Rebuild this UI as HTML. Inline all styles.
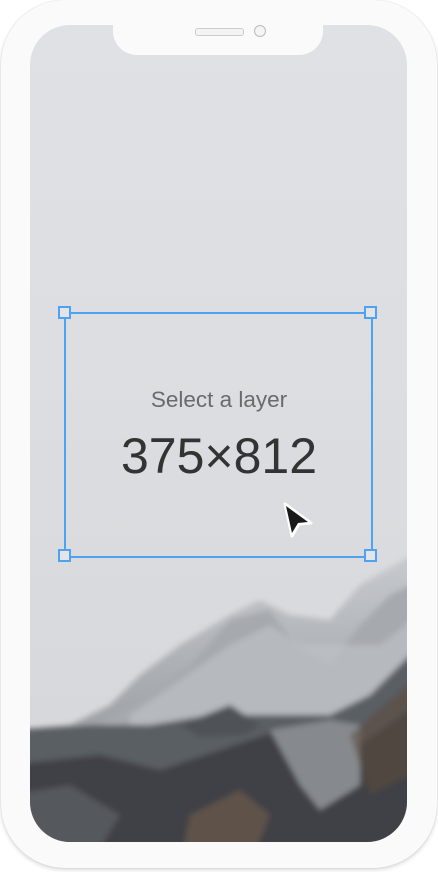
<!DOCTYPE html>
<html><head><style>
html,body{margin:0;padding:0;width:438px;height:872px;background:#fff;overflow:hidden;font-family:"Liberation Sans",sans-serif}
.phone{position:absolute;left:1px;top:0;width:436px;height:868px;border-radius:64px;background:#fafafa;box-shadow:0 2px 4px rgba(0,0,0,.15),0 0 1px rgba(0,0,0,.2)}
.screen{position:absolute;left:30px;top:25px;width:377px;height:817px;border-radius:40px;overflow:hidden;background:linear-gradient(#dfe1e5 0%,#dcdee1 40%,#d9dbde 65%,#d4d6d9 100%)}
.notch{position:absolute;left:113px;top:25px;width:210px;height:30px;background:#fafafa;border-radius:0 0 24px 24px}
.speaker{position:absolute;left:195px;top:28px;width:47px;height:6px;border-radius:3px;border:1px solid #ccc;background:#f4f4f4}
.cam{position:absolute;left:254px;top:25px;width:10px;height:10px;border-radius:50%;border:1px solid #bbb;background:#f4f4f4}
.box{position:absolute;left:64px;top:312px;width:309px;height:246px;border:2.5px solid #4da3f2;box-sizing:border-box}
.h{position:absolute;width:13px;height:13px;border:2px solid #4da3f2;background:#e2e4e7;box-sizing:border-box}
.t1{position:absolute;left:0;width:438px;top:387px;text-align:center;font-size:22.5px;color:#6a6a6a}
.t2{position:absolute;left:0;width:438px;top:427px;text-align:center;font-size:50px;color:#333}
</style></head><body>
<div class="phone"></div>
<div class="screen">
<svg width="377" height="817" viewBox="0 0 377 817" style="position:absolute;left:0;top:0">
<defs>
<linearGradient id="fog" x1="0" y1="0" x2="0" y2="1"><stop offset="0" stop-color="#c9ccd0"/><stop offset="1" stop-color="#7e8287"/></linearGradient>
<filter id="b"><feGaussianBlur stdDeviation="3"/></filter>
</defs>
<g filter="url(#b)">
<polygon points="40,700 80,680 110,650 150,620 200,590 230,575 260,590 300,595 330,560 400,520 400,840 -20,840 -20,705" fill="url(#fog)"/>
<polygon points="60,705 120,670 160,640 200,595 240,585 265,620 300,640 330,600 360,570 400,550 400,840 -20,840 -20,715" fill="#a6a9ad"/>
<polygon points="100,690 150,655 200,620 240,600 270,620 320,620 350,620 400,580 400,840 100,840" fill="#c2c5c9" opacity=".6"/>
<polygon points="-20,705 60,700 120,700 180,690 240,690 300,690 340,670 400,610 400,840 -20,840" fill="#5a5e63"/>
<polygon points="-20,740 70,730 130,745 190,725 250,705 300,700 330,720 400,670 400,840 -20,840" fill="#3f4146"/>
<polygon points="240,705 300,695 330,700 330,760 290,785 270,760" fill="#868a8f"/>
<polygon points="150,700 200,680 230,700 215,710 170,712" fill="#505358"/>
<polygon points="160,790 210,765 240,790 220,840 150,840" fill="#6e5a48" opacity=".7"/>
<polygon points="320,710 400,640 400,740 340,770" fill="#5c4a3c" opacity=".55"/>
<polygon points="-20,770 40,760 90,790 60,840 -20,840" fill="#55585c"/>
</g>
</svg>
</div>
<div class="notch"></div>
<div class="speaker"></div>
<div class="cam"></div>
<div class="box"></div>
<div class="h" style="left:58px;top:306px"></div>
<div class="h" style="left:364px;top:306px"></div>
<div class="h" style="left:58px;top:549px"></div>
<div class="h" style="left:364px;top:549px"></div>
<div class="t1">Select a layer</div>
<div class="t2">375×812</div>
<svg style="position:absolute;left:281px;top:501px" width="34" height="38" viewBox="0 0 34 38">
<path d="M4 3 L30 22 L18 23 L11 35 Z" fill="#fff" stroke="#fff" stroke-width="3" stroke-linejoin="round"/>
<path d="M5 5 L27 21 L17 22 L11 32 Z" fill="#1a1a1a"/>
</svg>
</body></html>
